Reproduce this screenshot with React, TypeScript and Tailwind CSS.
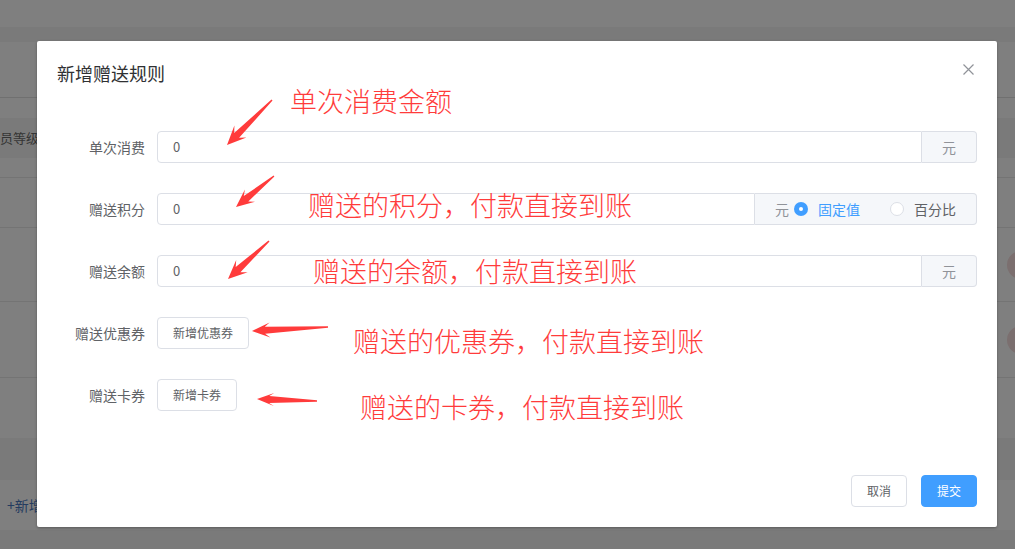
import { ReactNode } from 'react'

const uiFont = "font-['Noto_Sans_CJK_SC','Liberation_Sans',sans-serif]"

function arrowPoints(tx: number, ty: number, px: number, py: number, head = 18, hw = 8, nw = 3.5) {
  const dx = tx - px
  const dy = ty - py
  const len = Math.hypot(dx, dy)
  const ux = dx / len
  const uy = dy / len
  const nx = -uy
  const ny = ux
  const pt = (along: number, side: number, bx = px, by = py) =>
    `${(bx + ux * along + nx * side).toFixed(1)},${(by + uy * along + ny * side).toFixed(1)}`
  return [
    pt(0, 0),
    pt(head, hw),
    pt(head * 0.72, nw),
    pt(0, 0.7, tx, ty),
    pt(0, -0.7, tx, ty),
    pt(head * 0.72, -nw),
    pt(head, -hw),
  ].join(' ')
}

const arrows = [
  { t: [235, 59], p: [190, 104], head: 19, hw: 8.5 },
  { t: [237, 135], p: [199, 166], head: 18, hw: 8 },
  { t: [232, 200], p: [191, 238], head: 19, hw: 8.5 },
  { t: [291, 286], p: [215, 290], head: 18, hw: 7.5 },
  { t: [280, 360], p: [220, 358], head: 17, hw: 6.5 },
]

function FormRow({ label, children }: { label: string; children: ReactNode }) {
  return (
    <div className="flex h-8 items-center">
      <div className="w-[100px] shrink-0 pr-3 text-right text-sm leading-7 text-[#606266]">{label}</div>
      {children}
    </div>
  )
}

function ValueInput({ children }: { children: ReactNode }) {
  return (
    <div className="flex h-8 flex-1">
      <div className="flex flex-1 items-center rounded-l border border-[#dcdfe6] px-[15px] text-[13px] text-[#606266]">
        0
      </div>
      <div className="flex items-center rounded-r border border-l-0 border-[#dcdfe6] bg-[#f5f7fa] px-5 text-sm text-[#909399]">
        {children}
      </div>
    </div>
  )
}

function Radio({ checked, label }: { checked?: boolean; label: string }) {
  return (
    <span className="flex items-center gap-[10px]">
      {checked ? (
        <span className="flex h-[14px] w-[14px] items-center justify-center rounded-full bg-[#409eff]">
          <span className="h-1 w-1 rounded-full bg-white" />
        </span>
      ) : (
        <span className="h-[14px] w-[14px] rounded-full border border-[#dcdfe6] bg-white" />
      )}
      <span className={checked ? 'text-[#409eff]' : 'text-[#606266]'}>{label}</span>
    </span>
  )
}

function PlainButton({ children }: { children: ReactNode }) {
  return (
    <button className="h-8 rounded border border-[#dcdfe6] bg-white px-[15px] text-xs text-[#606266]">
      {children}
    </button>
  )
}

function BackgroundPage() {
  return (
    <div className="flex h-[549px] w-[1015px] flex-col overflow-hidden bg-white text-sm text-[#606266]">
      <div className="h-[27px] shrink-0" />
      <div className="h-[15px] shrink-0 bg-[#f4f4f4]" />
      <div className="h-[56px] shrink-0 border-b border-[#e0e0e0]" />
      <div className="h-[20px] shrink-0" />
      <div className="flex h-[40px] shrink-0 items-center whitespace-nowrap bg-[#f5f5f5] text-[13px] text-[#6a6a6a]">
        <span className="-ml-[13px]">会员等级</span>
      </div>
      <div className="h-[20px] shrink-0 border-b border-[#e8e8e8]" />
      <div className="h-[50px] shrink-0 border-b border-[#e8e8e8]" />
      <div className="flex h-[74px] shrink-0 items-center justify-end border-b border-[#e8e8e8]">
        <span className="-mr-[20px] h-[28px] w-[28px] rounded-full bg-[#f6dede]" />
      </div>
      <div className="flex h-[76px] shrink-0 items-center justify-end border-b border-[#e8e8e8]">
        <span className="-mr-[20px] h-[28px] w-[28px] rounded-full bg-[#f6dede]" />
      </div>
      <div className="h-[60px] shrink-0" />
      <div className="h-[42px] shrink-0 bg-[#f5f5f5]" />
      <div className="flex h-[50px] shrink-0 items-center pl-[7px] text-[#4b78c0]">+新增</div>
      <div className="flex-1 bg-[#f4f4f4]" />
    </div>
  )
}

export default function App() {
  return (
    <div className={`relative h-[549px] w-[1015px] overflow-hidden ${uiFont}`}>
      <BackgroundPage />

      <div className="absolute inset-0 flex items-start bg-black/50 pl-[37px] pt-[41px]">
        <div className="relative flex h-[486px] w-[960px] flex-col rounded-[2px] bg-white shadow-[0_1px_3px_rgba(0,0,0,0.3)]">
          <div className="flex items-start justify-between px-5 pb-[10px] pt-5">
            <span className="text-lg leading-6 text-[#303133]">新增赠送规则</span>
            <button className="mr-[3px] mt-[3px] text-[#909399]" aria-label="close">
              <svg width="11" height="11" viewBox="0 0 11 11">
                <path d="M0.5 0.5 L10.5 10.5 M10.5 0.5 L0.5 10.5" stroke="currentColor" strokeWidth="1.2" />
              </svg>
            </button>
          </div>

          <div className="flex flex-col gap-[30px] px-5 pt-[36px]">
            <FormRow label="单次消费">
              <ValueInput>元</ValueInput>
            </FormRow>
            <FormRow label="赠送积分">
              <ValueInput>
                <span className="mr-[5px]">元</span>
                <span className="flex items-center gap-[30px]">
                  <Radio checked label="固定值" />
                  <Radio label="百分比" />
                </span>
              </ValueInput>
            </FormRow>
            <FormRow label="赠送余额">
              <ValueInput>元</ValueInput>
            </FormRow>
            <FormRow label="赠送优惠券">
              <PlainButton>新增优惠券</PlainButton>
            </FormRow>
            <FormRow label="赠送卡券">
              <PlainButton>新增卡券</PlainButton>
            </FormRow>
          </div>

          <div className="mt-auto flex justify-end gap-[14px] px-5 pb-5">
            <PlainButton>取消</PlainButton>
            <button className="h-8 rounded border border-[#409eff] bg-[#409eff] px-[15px] text-xs text-white">
              提交
            </button>
          </div>

          {/* annotations drawn over the form */}
          <svg className="pointer-events-none absolute inset-0" width="960" height="486">
            {arrows.map((a, i) => (
              <polygon key={i} points={arrowPoints(a.t[0], a.t[1], a.p[0], a.p[1], a.head, a.hw)} fill="#ff3b3b" />
            ))}
          </svg>
          <span className="pointer-events-none absolute left-[253px] top-[46px] text-[27px] font-light leading-none text-[#ff3b3b]">
            单次消费金额
          </span>
          <span className="pointer-events-none absolute left-[271px] top-[150px] text-[27px] font-light leading-none text-[#ff3b3b]">
            赠送的积分，付款直接到账
          </span>
          <span className="pointer-events-none absolute left-[276px] top-[216px] text-[27px] font-light leading-none text-[#ff3b3b]">
            赠送的余额，付款直接到账
          </span>
          <span className="pointer-events-none absolute left-[316px] top-[286px] text-[27px] font-light leading-none text-[#ff3b3b]">
            赠送的优惠券，付款直接到账
          </span>
          <span className="pointer-events-none absolute left-[323px] top-[352px] text-[27px] font-light leading-none text-[#ff3b3b]">
            赠送的卡券，付款直接到账
          </span>
        </div>
      </div>
    </div>
  )
}
